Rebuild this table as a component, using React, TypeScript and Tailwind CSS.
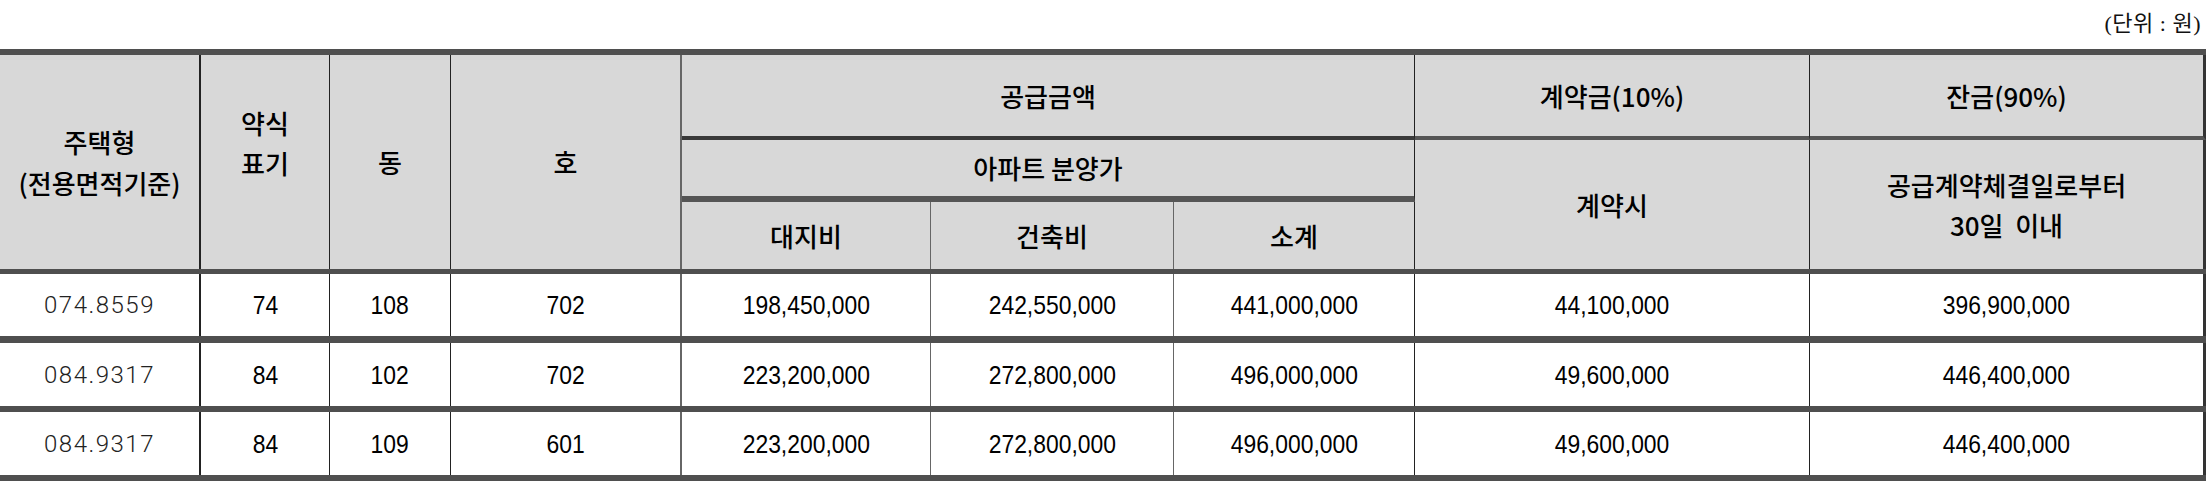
import React from "react";

const ko = "font-['Noto_Sans_CJK_KR','Noto_Sans',sans-serif]";

function HCell({
  className = "",
  children,
}: {
  className?: string;
  children: React.ReactNode;
}) {
  return (
    <div
      className={`bg-[#d8d8d8] flex flex-col items-center justify-center text-center text-[26px] leading-[40px] font-medium text-black whitespace-pre ${ko} ${className}`}
    >
      {children}
    </div>
  );
}

function Num({ children }: { children: React.ReactNode }) {
  return (
    <span className="inline-block scale-x-[0.88] font-['Liberation_Sans',Arial,sans-serif] text-[26px] text-black leading-none">
      {children}
    </span>
  );
}

const rows = [
  ["074.8559", "74", "108", "702", "198,450,000", "242,550,000", "441,000,000", "44,100,000", "396,900,000"],
  ["084.9317", "84", "102", "702", "223,200,000", "272,800,000", "496,000,000", "49,600,000", "446,400,000"],
  ["084.9317", "84", "109", "601", "223,200,000", "272,800,000", "496,000,000", "49,600,000", "446,400,000"],
];

const colBorders = [
  "border-r-2 border-[#222]",
  "border-r border-[#222]",
  "border-r border-[#222]",
  "border-r-2 border-[#666]",
  "border-r border-[#666]",
  "border-r border-[#666]",
  "border-r border-[#222]",
  "border-r border-[#222]",
  "border-r-[3px] border-[#333]",
];

const gridCols =
  "grid-cols-[201px_129px_121px_231px_249px_243px_241px_395px_396px]";

export default function App() {
  return (
    <div className="w-[2206px] h-[487px] bg-white overflow-hidden">
      <div className="h-[49px] flex items-center justify-end pr-[5px] pb-[2px]">
        <span className="text-[22px] tracking-[0.5px] text-[#111] font-['Liberation_Serif','Noto_Sans_CJK_KR',serif] leading-none">
          (단위 : 원)
        </span>
      </div>

      {/* header */}
      <div
        className={`grid ${gridCols} grid-rows-[85px_62px_67px] border-t-[6px] border-b-[5px] border-[#4f4f4f]`}
      >
        <HCell className="row-span-3 col-start-1 row-start-1 border-r-2 border-[#222] leading-[41px]">
          <span>주택형</span>
          <span>(전용면적기준)</span>
        </HCell>
        <HCell className="row-span-3 col-start-2 row-start-1 border-r border-[#222] pb-[38px]">
          <span>약식</span>
          <span>표기</span>
        </HCell>
        <HCell className="row-span-3 col-start-3 row-start-1 border-r border-[#222]">
          <span>동</span>
        </HCell>
        <HCell className="row-span-3 col-start-4 row-start-1 border-r-2 border-[#666]">
          <span>호</span>
        </HCell>
        <HCell className="col-start-5 col-span-3 row-start-1 border-r border-b-4 border-r-[#222] border-b-[#3a3a3a]">
          <span>공급금액</span>
        </HCell>
        <HCell className="col-start-8 row-start-1 border-r border-b-4 border-r-[#222] border-b-[#555]">
          <span>계약금(10%)</span>
        </HCell>
        <HCell className="col-start-9 row-start-1 border-r-[3px] border-b-4 border-r-[#333] border-b-[#555]">
          <span>잔금(90%)</span>
        </HCell>
        <HCell className="col-start-5 col-span-3 row-start-2 border-r border-b-[6px] border-r-[#222] border-b-[#555]">
          <span>아파트 분양가</span>
        </HCell>
        <HCell className="col-start-8 row-start-2 row-span-2 border-r border-[#222]">
          <span>계약시</span>
        </HCell>
        <HCell className="col-start-9 row-start-2 row-span-2 border-r-[3px] border-[#333] leading-[37px]">
          <span>공급계약체결일로부터</span>
          <span>{"30일  이내"}</span>
        </HCell>
        <HCell className="col-start-5 row-start-3 border-r border-[#666]">
          <span>대지비</span>
        </HCell>
        <HCell className="col-start-6 row-start-3 border-r border-[#666]">
          <span>건축비</span>
        </HCell>
        <HCell className="col-start-7 row-start-3 border-r border-[#222]">
          <span>소계</span>
        </HCell>
      </div>

      {/* body */}
      {rows.map((r, i) => (
        <div
          key={i}
          className={`grid ${gridCols} h-[69px] ${i === 0 ? "border-b-[7px]" : "border-b-[6px]"} border-[#4f4f4f]`}
        >
          {r.map((v, j) => (
            <div
              key={j}
              className={`flex items-center justify-center ${colBorders[j]}`}
            >
              {j === 0 ? (
                <span className="font-['Roboto',sans-serif] font-light text-[24px] tracking-[1.5px] text-[#222] leading-none">
                  {v}
                </span>
              ) : (
                <Num>{v}</Num>
              )}
            </div>
          ))}
        </div>
      ))}
    </div>
  );
}
